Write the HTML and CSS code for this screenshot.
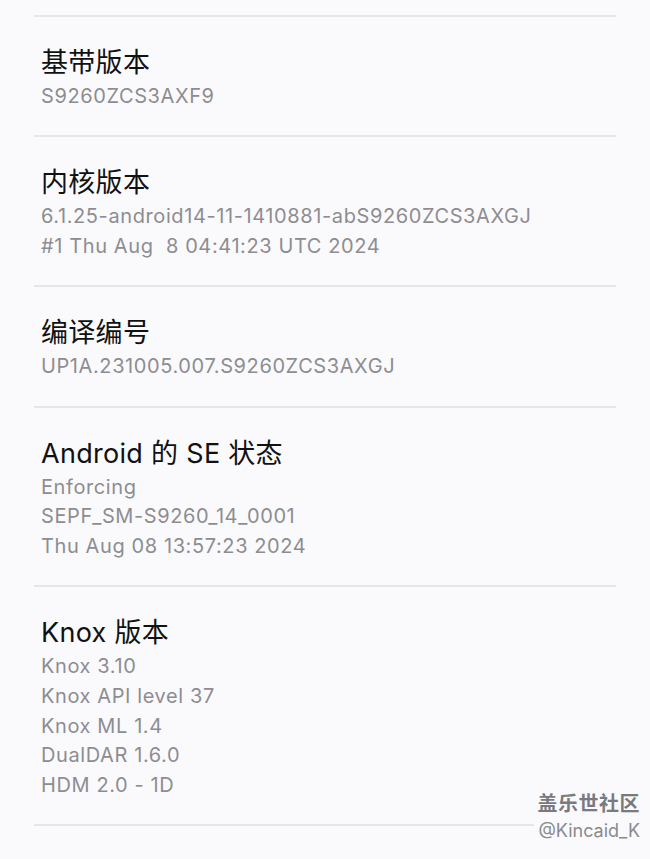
FILE: index.html
```html
<!DOCTYPE html>
<html lang="zh-CN">
<head>
<meta charset="utf-8">
<link rel="stylesheet" href="styles.css">
</head>
<body>
<div class="page">
  <div class="top-spacer"></div>
  <section class="item">
    <div class="title">基带版本</div>
    <div class="sub">
      <div>S9260ZCS3AXF9</div>
    </div>
  </section>
  <section class="item">
    <div class="title">内核版本</div>
    <div class="sub">
      <div>6.1.25-android14-11-1410881-abS9260ZCS3AXGJ</div>
      <div>#1 Thu Aug&nbsp; 8 04:41:23 UTC 2024</div>
    </div>
  </section>
  <section class="item">
    <div class="title">编译编号</div>
    <div class="sub">
      <div>UP1A.231005.007.S9260ZCS3AXGJ</div>
    </div>
  </section>
  <section class="item">
    <div class="title">Android 的 SE 状态</div>
    <div class="sub">
      <div>Enforcing</div>
      <div>SEPF_SM-S9260_14_0001</div>
      <div>Thu Aug 08 13:57:23 2024</div>
    </div>
  </section>
  <section class="item">
    <div class="title">Knox 版本</div>
    <div class="sub">
      <div>Knox 3.10</div>
      <div>Knox API level 37</div>
      <div>Knox ML 1.4</div>
      <div>DualDAR 1.6.0</div>
      <div>HDM 2.0 - 1D</div>
    </div>
  </section>
  <div class="watermark">
    <div class="wm-site">盖乐世社区</div>
    <div class="wm-user">@Kincaid_K</div>
  </div>
</div>
</body>
</html>
```
FILE: styles.css
```css
html, body {
  margin: 0;
  padding: 0;
  background: #fafafd;
}
body {
  font-family: Inter, "Noto Sans CJK SC", sans-serif;
  width: 650px;
  height: 859px;
  overflow: hidden;
}
.page {
  position: relative;
  height: 859px;
}
.top-spacer {
  height: 15px;
  margin: 0 34px;
  border-bottom: 2px solid #e6e6ea;
}
.item {
  margin: 0 34px;
  padding: 30px 7px 23.8px;
  border-bottom: 2px solid #e6e6ea;
}
.title {
  font-size: 27px;
  line-height: 32px;
  letter-spacing: 0.3px;
  color: #111111;
}
.sub {
  margin-top: 3px;
  font-size: 20px;
  line-height: 29.6px;
  letter-spacing: 0.6px;
  color: #8d8d91;
}
.watermark {
  position: absolute;
  right: 10px;
  top: 790px;
  text-align: right;
  background: #fafafd;
  padding-left: 4px;
}
.wm-site {
  font-size: 20px;
  font-weight: 700;
  line-height: 28px;
  color: #7a7a7e;
  letter-spacing: 0.5px;
}
.wm-user {
  font-size: 18px;
  line-height: 26px;
  color: #8a8a8e;
}
```
